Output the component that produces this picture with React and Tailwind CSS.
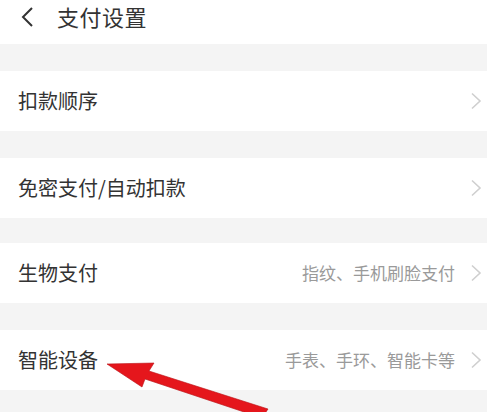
import React from "react";

const rows = [
  { label: "扣款顺序" },
  { label: "免密支付/自动扣款" },
  { label: "生物支付", hint: "指纹、手机刷脸支付" },
  { label: "智能设备", hint: "手表、手环、智能卡等" },
];

const gaps = ["h-[27px]", "h-[27px]", "h-[25px]", "h-[27px]"];

const Chevron = () => (
  <svg width="12" height="18" viewBox="0 0 12 18" className="ml-[15px] mr-[5px]">
    <path d="M2 1.5 L10 9 L2 16.5" fill="none" stroke="#cfcfcf" strokeWidth="1.6" />
  </svg>
);

export default function App() {
  return (
    <div
      className="relative w-[487px] h-[412px] overflow-hidden bg-[#f4f4f4]"
      style={{ fontFamily: '"Noto Sans CJK SC", "Noto Sans", sans-serif' }}
    >
      {/* header */}
      <div className="h-[44px] bg-white flex items-start pt-[5px]">
        <svg width="14" height="20" viewBox="0 0 14 20" className="ml-[20px] mt-[2px]">
          <path d="M12 1 L3 10 L12 19" fill="none" stroke="#333" strokeWidth="2" />
        </svg>
        <span className="ml-[23px] text-[22px] leading-[22px] text-[#333] tracking-[0.5px]">支付设置</span>
      </div>

      {rows.map((r, i) => (
        <div key={r.label}>
          <div className={gaps[i]} />
          <div className="h-[60px] bg-white flex items-center pl-[18px]">
            <span className="text-[20px] text-[#333]">{r.label}</span>
            <span className="ml-auto text-[17px] text-[#9a9a9a]">{r.hint}</span>
            <Chevron />
          </div>
        </div>
      ))}

      {/* red arrow annotation */}
      <svg className="absolute left-0 top-0" width="487" height="412" viewBox="0 0 487 412">
        <path
          d="M107 364 L154 363 L149 371 L268 409 L262 418 L145 379 L142 387 Z"
          fill="#e5161c"
          stroke="#b80f14"
          strokeWidth="0.6"
          strokeLinejoin="round"
        />
      </svg>
    </div>
  );
}
